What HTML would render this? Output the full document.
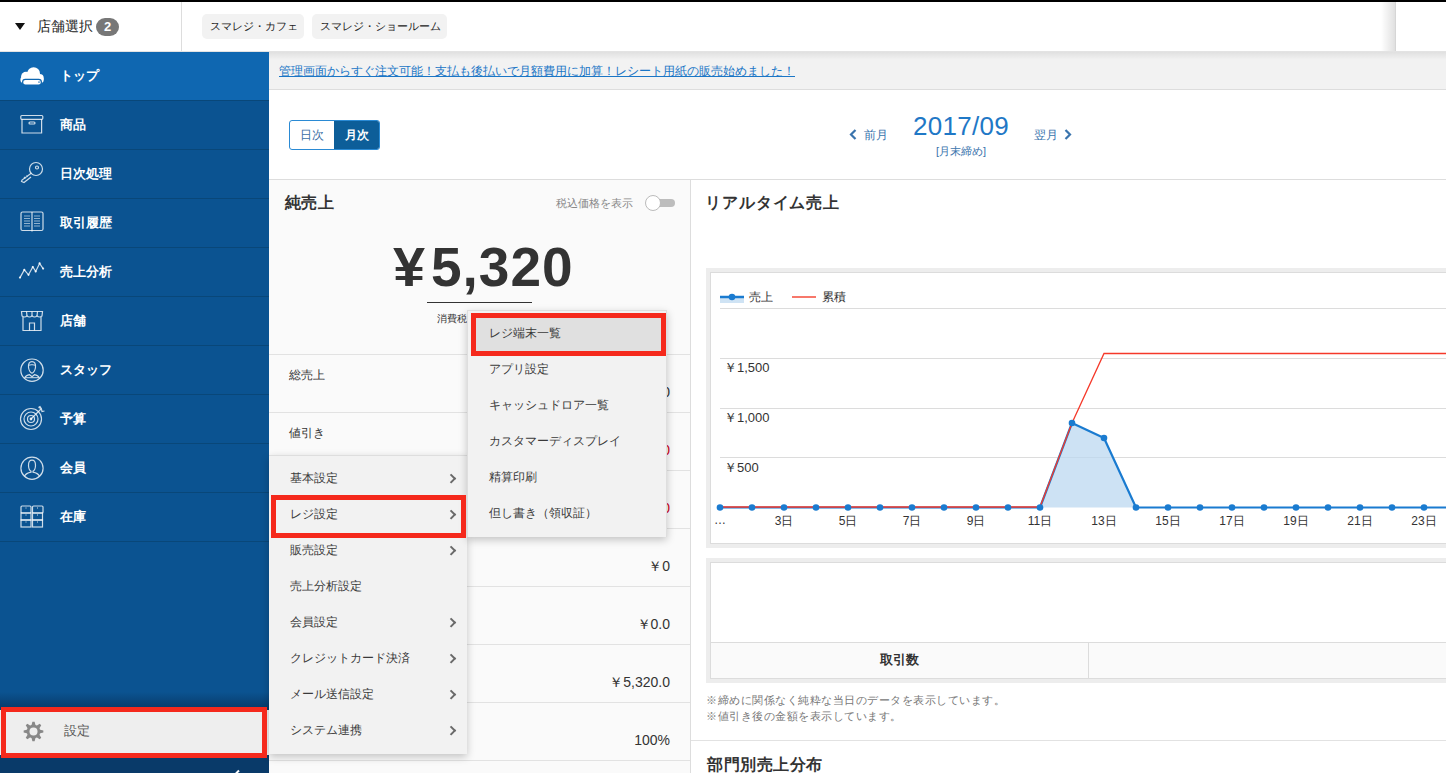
<!DOCTYPE html>
<html lang="ja"><head><meta charset="utf-8">
<style>
*{box-sizing:border-box;margin:0;padding:0}
html,body{width:1446px;height:773px;overflow:hidden;background:#fff;font-family:"Liberation Sans",sans-serif;color:#333}
.abs{position:absolute}
#topbar{left:0;top:0;width:1446px;height:2px;background:#000}
#header{left:0;top:2px;width:1446px;height:50px;background:#fff;border-bottom:1px solid #e3e3e3}
#hdiv{left:181px;top:2px;width:1px;height:49px;background:#ddd}
.tri{left:15px;top:23px;width:0;height:0;border-left:5px solid transparent;border-right:5px solid transparent;border-top:7px solid #111}
#store{left:37px;top:16px;font-size:14px;line-height:20px;color:#222;white-space:nowrap}
#badge{left:96px;top:18px;width:23px;height:18px;border-radius:9px;background:#777;color:#fff;font-weight:bold;font-size:13px;line-height:18px;text-align:center}
.chip{top:14px;height:25px;background:#f2f2f2;border-radius:5px;font-size:11px;line-height:25px;color:#222;padding:0 8px;white-space:nowrap}
#hshadow{left:1381px;top:2px;width:15px;height:49px;background:linear-gradient(to right,rgba(0,0,0,0),rgba(0,0,0,.12));border-right:1px solid #d6d6d6}
#side{left:0;top:52px;width:269px;height:721px;background:#0b5391;overflow:hidden}
.si{position:absolute;left:0;width:269px;height:49px;border-bottom:1px solid #094779}
.si.act{background:#0f67b1}
.si span{position:absolute;left:60px;top:15px;font-size:13px;line-height:18px;color:#fff;font-weight:bold;white-space:nowrap}
.si svg{position:absolute;left:0;top:0}
#sgrad{left:0;top:640px;width:269px;height:16px;background:linear-gradient(rgba(5,30,60,0),rgba(5,30,60,.45))}
#sbot{left:0;top:656px;width:269px;height:65px;background:#093a69}
#setitem{left:0;top:658px;width:269px;height:45px;background:#eee}
#setitem span{position:absolute;left:64px;top:12px;font-size:12.5px;line-height:18px;color:#555}
#banner{left:269px;top:52px;width:1177px;height:38px;background:#f2f2f2;border-bottom:1px solid #ddd}
#banner a{position:absolute;left:10px;top:11px;font-size:12px;line-height:16px;color:#1a76c6;text-decoration:underline;white-space:nowrap}
#bshadow{left:269px;top:52px;width:1177px;height:8px;background:linear-gradient(rgba(0,0,0,.075),rgba(0,0,0,0))}
#datebar{left:269px;top:90px;width:1177px;height:90px;background:#fff;border-bottom:1px solid #ddd}
#btns{left:289px;top:120px;width:91px;height:30px;border:1px solid #2a8ad4;border-radius:3px;overflow:hidden;background:#fff}
#btns div{position:absolute;top:0;height:28px;font-size:12px;line-height:29px;text-align:center}
#nav-prev{left:849px;top:126px;font-size:12px;line-height:18px;color:#3a74ad;white-space:nowrap}
#nav-next{left:1034px;top:126px;font-size:12px;line-height:18px;color:#3a74ad;white-space:nowrap}
#ym{left:913px;top:111px;letter-spacing:.3px;font-size:26px;line-height:30px;color:#1f78c6;white-space:nowrap}
#ymsub{left:936px;top:144px;font-size:11px;line-height:14px;color:#3a74ad;white-space:nowrap}
#lpanel{left:269px;top:180px;width:422px;height:593px;background:#fafafa;border-right:1px solid #ddd}
#rpanel{left:691px;top:180px;width:755px;height:593px;background:#fff}
.h16{font-size:16px;line-height:20px;font-weight:bold;color:#333;white-space:nowrap}
.row{position:absolute;left:0;width:421px;height:58px;border-top:1px solid #e2e2e2}
.row .l{position:absolute;left:20px;top:12px;font-size:12px;line-height:16px;color:#333;white-space:nowrap}
.row .v{position:absolute;right:20px;top:28px;font-size:14px;line-height:18px;color:#333;white-space:nowrap}
.menu{background:#f2f2f2;box-shadow:0 3px 8px rgba(0,0,0,.22)}
.mi{position:absolute;left:0;height:36px;width:100%;font-size:12.2px;line-height:36px;color:#3a3a3a;white-space:nowrap}
.mi .c{position:absolute;right:13px;top:15px;width:6.5px;height:6.5px;border-right:2px solid #6a6a6a;border-top:2px solid #6a6a6a;transform:rotate(45deg)}
.red{border:5px solid #f5291c}
.box{border:4px solid #ededed;outline:1px solid #dcdcdc;outline-offset:-5px}
.xl{width:40px;text-align:center;top:513px;font-size:12px;line-height:16px;color:#333}
.note{font-size:11px;line-height:16px;color:#777;white-space:nowrap;letter-spacing:.5px}
</style></head><body>
<div class="abs" id="topbar"></div>
<div class="abs" id="header"></div>
<div class="abs" id="hdiv"></div>
<div class="abs tri"></div>
<div class="abs" id="store">店舗選択</div>
<div class="abs" id="badge">2</div>
<div class="abs chip" style="left:202px;width:102px">スマレジ・カフェ</div>
<div class="abs chip" style="left:312px;width:135px">スマレジ・ショールーム</div>
<div class="abs" id="hshadow"></div>

<div class="abs" id="side">
  <div class="si act" style="top:0"><svg width="60" height="49" viewBox="0 0 60 49"><g fill="#fff"><circle cx="33.6" cy="21.6" r="6.4"/><circle cx="26" cy="24.6" r="4.9"/><circle cx="39.6" cy="26" r="4.1"/><rect x="20.4" y="24.5" width="23.3" height="6.5" rx="3.2"/></g><rect x="22.6" y="27.4" width="18.8" height="5.6" rx="2.8" fill="#fff" stroke="#0f67b1" stroke-width="1.2"/><circle cx="39" cy="30.1" r="0.9" fill="#4f8fc8"/></svg><span>トップ</span></div>
  <div class="si" style="top:49px"><svg width="60" height="49" viewBox="0 0 60 49" fill="none" stroke="rgba(255,255,255,.8)" stroke-width="1.2"><rect x="20.8" y="14.5" width="22" height="3.8" rx="1"/><path d="M22 18.3 V32 H41.6 V18.3"/><rect x="29" y="21" width="6" height="2" rx="1"/></svg><span>商品</span></div>
  <div class="si" style="top:98px"><svg width="60" height="49" viewBox="0 0 60 49" fill="none" stroke="rgba(255,255,255,.8)" stroke-width="1.2"><circle cx="36" cy="19" r="6.5"/><circle cx="37" cy="17.5" r="1.5"/><path d="M31.5 23 L22 30 L21.5 31.5 L24 32.5 L31 27 M25.5 28.5 L24 27 M27.5 27 L26.5 25.5"/></svg><span>日次処理</span></div>
  <div class="si" style="top:147px"><svg width="60" height="49" viewBox="0 0 60 49" fill="none" stroke="rgba(255,255,255,.8)" stroke-width="1.2"><rect x="21" y="13" width="22" height="18.5" rx="1.5"/><path d="M32 13 V32.5"/><path d="M24 17 H30 M24 19.5 H30 M24 22 H30 M24 24.5 H30 M24 27 H30 M34 17 H40 M34 19.5 H40 M34 22 H40 M34 24.5 H40 M34 27 H40" stroke-width="1.1" stroke="rgba(255,255,255,.55)"/></svg><span>取引履歴</span></div>
  <div class="si" style="top:196px"><svg width="60" height="49" viewBox="0 0 60 49" fill="none" stroke="rgba(255,255,255,.8)" stroke-width="1.2"><path d="M20 29.6 L24.3 21.9 L28.5 26.8 L32.8 19 L35.7 23.4 L39.6 15.4 L43.1 20.6"/><g fill="rgba(255,255,255,.85)" stroke="none"><circle cx="20" cy="29.6" r="1.1"/><circle cx="24.3" cy="21.9" r="1.1"/><circle cx="28.5" cy="26.8" r="1.1"/><circle cx="32.8" cy="19" r="1.1"/><circle cx="35.7" cy="23.4" r="1.1"/><circle cx="39.6" cy="15.4" r="1.1"/><circle cx="43.1" cy="20.6" r="1.1"/></g></svg><span>売上分析</span></div>
  <div class="si" style="top:245px"><svg width="60" height="49" viewBox="0 0 60 49" fill="none" stroke="rgba(255,255,255,.8)" stroke-width="1.2"><path d="M21.5 14.5 H42.5 L42 19 Q39.5 21 37 19 Q34.5 21 32 19 Q29.5 21 27 19 Q24.5 21 22 19 Z"/><path d="M26.5 14.5 L27 19 M32 14.5 V19 M37.5 14.5 L37 19"/><path d="M23 20 V33.5 H41 V20"/><path d="M29.5 33.5 V26 H34.5 V33.5"/></svg><span>店舗</span></div>
  <div class="si" style="top:294px"><svg width="60" height="49" viewBox="0 0 60 49" fill="none" stroke="rgba(255,255,255,.8)" stroke-width="1.2"><g transform="translate(0 2.7)"><circle cx="32" cy="21.5" r="11.2"/><path d="M28.5 18.5 Q28 13 32 13 Q36 13 35.5 18.5 Q35 23 32 24.5 Q29 23 28.5 18.5 Z"/><path d="M28.8 16.5 Q32 15.5 35.2 16.5" stroke-width="1"/><path d="M24.5 29.5 Q26 26.5 29.5 26 L32 28 L34.5 26 Q38 26.5 39.5 29.5"/><path d="M25.5 29 H38.5" stroke-width="1"/></g></svg><span>スタッフ</span></div>
  <div class="si" style="top:343px"><svg width="60" height="49" viewBox="0 0 60 49" fill="none" stroke="rgba(255,255,255,.8)" stroke-width="1.2"><g transform="translate(0 1.5)"><circle cx="31" cy="22.5" r="10.5"/><circle cx="31" cy="22.5" r="7"/><circle cx="31" cy="22.5" r="3.5"/><circle cx="31" cy="22.5" r="0.8" fill="#fff"/><path d="M31 22.5 L41 12.5 M38.5 11 L41.3 12 L42 15 L44.5 14.5 M38.5 11 L40 10 L41.3 12"/></g></svg><span>予算</span></div>
  <div class="si" style="top:392px"><svg width="60" height="49" viewBox="0 0 60 49" fill="none" stroke="rgba(255,255,255,.8)" stroke-width="1.2"><circle cx="32" cy="24.2" r="11.1"/><path transform="translate(0 2.2)" d="M28.5 19 Q28.5 14 32 14 Q35.5 14 35.5 19 Q35.5 23.5 33 25 L33 26 Q38 27 39.5 30 M28.5 19 Q28.5 23.5 31 25 L31 26 Q26 27 24.5 30"/></svg><span>会員</span></div>
  <div class="si" style="top:441px"><svg width="60" height="49" viewBox="0 0 60 49" fill="none" stroke="rgba(255,255,255,.8)" stroke-width="1.2"><rect x="21" y="13" width="10" height="7" rx="1"/><rect x="32.5" y="13" width="10.5" height="7" rx="1"/><rect x="21" y="20" width="10" height="7" rx="0"/><rect x="32.5" y="20" width="10" height="7"/><rect x="21" y="27" width="10" height="7"/><rect x="32.5" y="27" width="10" height="7"/><path d="M25.5 15 H26.5 M37 15 H38 M25.5 22 H26.5 M37 22 H38 M25.5 29 H26.5 M37 29 H38" stroke-width="1"/></svg><span>在庫</span></div>
  <div class="abs" id="sgrad"></div>
  <div class="abs" id="sbot"></div>
  <div class="abs" id="setitem"><svg class="abs" style="left:22.8px;top:10.5px" width="21" height="21" viewBox="-10.5 -10.5 21 21"><path fill="#888" d="M-2.56 -6.19 L-1.87 -6.75 L-1.12 -9.84 L1.12 -9.84 L1.87 -6.75 L2.56 -6.19 L3.45 -6.09 L6.16 -7.75 L7.75 -6.16 L6.09 -3.45 L6.19 -2.56 L6.75 -1.87 L9.84 -1.12 L9.84 1.12 L6.75 1.87 L6.19 2.56 L6.09 3.45 L7.75 6.16 L6.16 7.75 L3.45 6.09 L2.56 6.19 L1.87 6.75 L1.12 9.84 L-1.12 9.84 L-1.87 6.75 L-2.56 6.19 L-3.45 6.09 L-6.16 7.75 L-7.75 6.16 L-6.09 3.45 L-6.19 2.56 L-6.75 1.87 L-9.84 1.12 L-9.84 -1.12 L-6.75 -1.87 L-6.19 -2.56 L-6.09 -3.45 L-7.75 -6.16 L-6.16 -7.75 L-3.45 -6.09 Z"/><circle r="4" fill="#eee"/></svg><span>設定</span></div>
  <svg class="abs" style="left:229px;top:717px" width="14" height="10"><path d="M10 1.5 L5 6.5 L10 11.5" stroke="#fff" stroke-width="2" fill="none"/></svg>
</div>

<div class="abs" id="banner"><a>管理画面からすぐ注文可能！支払も後払いで月額費用に加算！レシート用紙の販売始めました！</a></div>
<div class="abs" id="bshadow"></div>

<div class="abs" id="datebar"></div>
<div class="abs" id="btns"><div style="left:0;width:44px;color:#3a6ea5">日次</div><div style="left:44px;width:46px;background:#0d5e99;color:#fff;font-weight:bold">月次</div></div>
<div class="abs" id="nav-prev"><svg width="8" height="11" style="vertical-align:-1px;margin-right:7px"><path d="M6.5 1 L2 5.5 L6.5 10" stroke="#3a74ad" stroke-width="2.2" fill="none"/></svg>前月</div>
<div class="abs" id="ym">2017/09</div>
<div class="abs" id="ymsub">[月末締め]</div>
<div class="abs" id="nav-next">翌月<svg width="8" height="11" style="vertical-align:-1px;margin-left:6px"><path d="M1.5 1 L6 5.5 L1.5 10" stroke="#3a74ad" stroke-width="2.2" fill="none"/></svg></div>

<!-- left panel -->
<div class="abs" id="lpanel">
  <div class="abs h16" style="left:16px;top:13px;letter-spacing:.3px">純売上</div>
  <div class="abs" style="left:287px;top:16px;font-size:11px;line-height:14px;color:#888;white-space:nowrap">税込価格を表示</div>
  <div class="abs" style="left:383px;top:19px;width:23px;height:8px;border-radius:4px;background:#bdbdbd"></div>
  <div class="abs" style="left:376px;top:15px;width:16px;height:16px;border-radius:8px;background:#fff;border:1px solid #bbb"></div>
  <div class="abs" style="left:124px;top:55px;font-size:55px;line-height:64px;font-weight:bold;color:#333;white-space:nowrap;transform:scaleX(1.05);transform-origin:left">¥</div><div class="abs" style="left:162px;top:55px;font-size:55px;line-height:64px;font-weight:bold;color:#333;white-space:nowrap;letter-spacing:1px">5,320</div>
  <div class="abs" style="left:158px;top:122px;width:105px;height:1px;background:#333"></div>
  <div class="abs" style="left:168px;top:132px;font-size:10px;line-height:14px;color:#333;white-space:nowrap">消費税 ¥0 含む</div>
  <div class="row" style="top:174px"><div class="l">総売上</div><div class="v">￥5,320</div></div>
  <div class="row" style="top:232px"><div class="l">値引き</div><div class="v" style="color:#d0021b">-￥0</div></div>
  <div class="row" style="top:290px"><div class="l">返品</div><div class="v" style="color:#d0021b">-￥0</div></div>
  <div class="row" style="top:348px"><div class="l">送料</div><div class="v">￥0</div></div>
  <div class="row" style="top:406px"><div class="l">消費税</div><div class="v">￥0.0</div></div>
  <div class="row" style="top:464px"><div class="l">純売上</div><div class="v">￥5,320.0</div></div>
  <div class="row" style="top:522px"><div class="l">比率</div><div class="v">100%</div></div>
  <div class="row" style="top:580px"></div>
</div>

<!-- right panel -->
<div class="abs" id="rpanel">
  <div class="abs h16" style="left:14px;top:13px;letter-spacing:.9px">リアルタイム売上</div>
</div>
<div class="abs box" style="left:706px;top:268px;width:760px;height:280px;background:#fff"></div>
<svg class="abs" style="left:0;top:0" width="1446" height="773">
  <g stroke="#dcdcdc" stroke-width="1">
    <path d="M720 308.5 H1446 M720 358.5 H1446 M720 408.5 H1446 M720 457.5 H1446"/>
  </g>
  <rect x="720" y="297" width="24" height="6" fill="#cfe3f4"/>
  <path d="M720 297 H744" stroke="#1a7bd0" stroke-width="2.5"/>
  <circle cx="732" cy="297" r="3.3" fill="#1a7bd0"/>
  <path d="M792 297 H816" stroke="#f7786b" stroke-width="2"/>
  <path d="M1040 507.5 L1072 423 L1104 438 L1136 507.5 Z" fill="#bcd8f0" fill-opacity=".75"/>
  <path d="M720 507.5 H1040 L1072 423 L1104 438 L1136 507.5 H1446" stroke="#1a7bd0" stroke-width="2.2" fill="none" stroke-linejoin="round"/>
  <path d="M720 507 H1040 L1072 423 L1104 353.5 H1446" stroke="#f5392a" stroke-width="1.3" fill="none"/>
  <g fill="#1a7bd0"><circle cx="720" cy="507.5" r="3.3"/><circle cx="752" cy="507.5" r="3.3"/><circle cx="784" cy="507.5" r="3.3"/><circle cx="816" cy="507.5" r="3.3"/><circle cx="848" cy="507.5" r="3.3"/><circle cx="880" cy="507.5" r="3.3"/><circle cx="912" cy="507.5" r="3.3"/><circle cx="944" cy="507.5" r="3.3"/><circle cx="976" cy="507.5" r="3.3"/><circle cx="1008" cy="507.5" r="3.3"/><circle cx="1040" cy="507.5" r="3.3"/><circle cx="1072" cy="423" r="3.3"/><circle cx="1104" cy="438" r="3.3"/><circle cx="1136" cy="507.5" r="3.3"/><circle cx="1168" cy="507.5" r="3.3"/><circle cx="1200" cy="507.5" r="3.3"/><circle cx="1232" cy="507.5" r="3.3"/><circle cx="1264" cy="507.5" r="3.3"/><circle cx="1296" cy="507.5" r="3.3"/><circle cx="1328" cy="507.5" r="3.3"/><circle cx="1360" cy="507.5" r="3.3"/><circle cx="1392" cy="507.5" r="3.3"/><circle cx="1424" cy="507.5" r="3.3"/></g>
</svg>
<div class="abs" style="left:749px;top:289px;font-size:12px;line-height:16px;color:#333">売上</div>
<div class="abs" style="left:822px;top:289px;font-size:12px;line-height:16px;color:#333">累積</div>
<div class="abs" style="left:724px;top:360px;font-size:13px;line-height:16px;color:#333">￥1,500</div>
<div class="abs" style="left:724px;top:410px;font-size:13px;line-height:16px;color:#333">￥1,000</div>
<div class="abs" style="left:724px;top:460px;font-size:13px;line-height:16px;color:#333">￥500</div>
<div class="abs" style="left:714px;top:512px;font-size:12px;line-height:16px;color:#333">…</div>
<div class="abs xl" style="left:764px">3日</div>
<div class="abs xl" style="left:828px">5日</div>
<div class="abs xl" style="left:892px">7日</div>
<div class="abs xl" style="left:956px">9日</div>
<div class="abs xl" style="left:1020px">11日</div>
<div class="abs xl" style="left:1084px">13日</div>
<div class="abs xl" style="left:1148px">15日</div>
<div class="abs xl" style="left:1212px">17日</div>
<div class="abs xl" style="left:1276px">19日</div>
<div class="abs xl" style="left:1340px">21日</div>
<div class="abs xl" style="left:1404px">23日</div>

<div class="abs box" style="left:706px;top:558px;width:760px;height:125px;background:#fff"></div>
<div class="abs" style="left:711px;top:642px;width:740px;height:36px;background:#fafafa;border-top:1px solid #dcdcdc"></div>
<div class="abs" style="left:1088px;top:642px;width:1px;height:36px;background:#dcdcdc"></div>
<div class="abs" style="left:880px;top:651px;font-size:13px;line-height:18px;font-weight:bold;color:#333;white-space:nowrap">取引数</div>
<div class="abs note" style="left:706px;top:692px">※締めに関係なく純粋な当日のデータを表示しています。</div>
<div class="abs note" style="left:706px;top:708px">※値引き後の金額を表示しています。</div>
<div class="abs" style="left:691px;top:740px;width:755px;height:1px;background:#e2e2e2"></div>
<div class="abs h16" style="left:707px;top:755px;letter-spacing:.5px">部門別売上分布</div>

<!-- menus -->
<div class="abs menu" style="left:269px;top:455px;width:198px;height:299px;border-top:1px solid #dedede">
  <div class="mi" style="top:4px;padding-left:21px">基本設定<i class="c"></i></div>
  <div class="mi" style="top:40px;padding-left:21px">レジ設定<i class="c"></i></div>
  <div class="mi" style="top:76px;padding-left:21px">販売設定<i class="c"></i></div>
  <div class="mi" style="top:112px;padding-left:21px">売上分析設定</div>
  <div class="mi" style="top:148px;padding-left:21px">会員設定<i class="c"></i></div>
  <div class="mi" style="top:184px;padding-left:21px">クレジットカード決済<i class="c"></i></div>
  <div class="mi" style="top:220px;padding-left:21px">メール送信設定<i class="c"></i></div>
  <div class="mi" style="top:256px;padding-left:21px">システム連携<i class="c"></i></div>
</div>
<div class="abs menu" style="left:467px;top:310px;width:200px;height:227px;border:1px solid #dedede;border-bottom:none">
  <div class="mi" style="top:4px;left:5px;width:189px;height:36px;background:#e0e0e0;padding-left:16px">レジ端末一覧</div>
  <div class="mi" style="top:40px;padding-left:21px">アプリ設定</div>
  <div class="mi" style="top:76px;padding-left:21px">キャッシュドロア一覧</div>
  <div class="mi" style="top:112px;padding-left:21px">カスタマーディスプレイ</div>
  <div class="mi" style="top:148px;padding-left:21px">精算印刷</div>
  <div class="mi" style="top:184px;padding-left:21px">但し書き（領収証）</div>
</div>
<div class="abs red" style="left:471px;top:313px;width:195px;height:43px"></div>
<div class="abs red" style="left:271px;top:495px;width:195px;height:43px"></div>
<div class="abs red" style="left:1px;top:707px;width:266px;height:51px"></div>
</body></html>
